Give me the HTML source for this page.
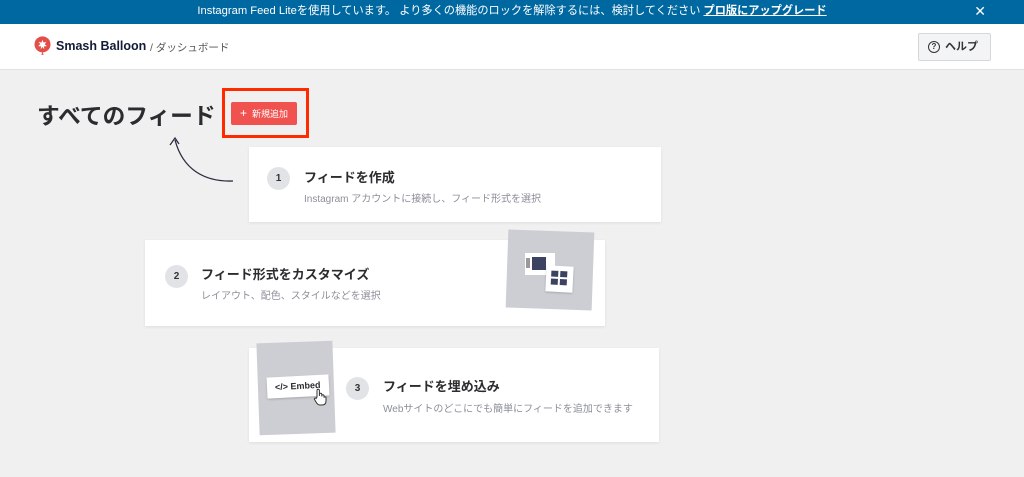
<!DOCTYPE html><html><head><meta charset="utf-8"><style>
*{box-sizing:border-box;margin:0;padding:0}
body{width:1024px;height:477px;overflow:hidden;background:#f0f0f1;font-family:"Liberation Sans","Noto Sans CJK JP",sans-serif;position:relative;color:#141b38}
.top{position:absolute;left:0;top:0;width:1024px;height:24px;background:#0068a0;color:#fff;font-size:11.2px;text-align:center;line-height:22px}
.top b{text-decoration:underline}
.hdr{position:absolute;top:24px;left:0;width:1024px;height:46px;background:#fff;border-bottom:1px solid #e2e2e2}
.card{position:absolute;background:#fff;box-shadow:0 1px 3px rgba(0,0,0,.08)}
.num{position:absolute;width:23px;height:23px;border-radius:50%;background:#e2e3e6;font-size:10px;font-weight:bold;text-align:center;line-height:23px;color:#333}
.t{position:absolute;font-size:13px;font-weight:bold;color:#2c2c30}
.s{position:absolute;font-size:10px;color:#8c8f9a}
</style></head><body>
<div class="top">Instagram Feed Liteを使用しています。 より多くの機能のロックを解除するには、検討してください <b>プロ版にアップグレード</b><span style="position:absolute;right:38px;font-size:14px">✕</span></div>
<div class="hdr">
<svg style="position:absolute;left:34px;top:12px" width="17" height="20" viewBox="0 0 15 18"><circle cx="7.5" cy="7.5" r="7.2" fill="#e34f48"/><path d="M7.5 14l-1 3h2z" fill="#e34f48"/><path d="M7.5 3.5l1 2.5 2.5-.8-1.5 2.2 2 1.7-2.7.2.3 2.6-1.6-2-1.6 2 .3-2.6-2.7-.2 2-1.7-1.5-2.2 2.5.8z" fill="#fff"/></svg>
<div style="position:absolute;left:56px;top:15px;font-size:12.5px;font-weight:bold;color:#141b38">Smash Balloon</div>
<div style="position:absolute;left:150px;top:16px;font-size:10.5px;color:#555">/ ダッシュボード</div>
<div style="position:absolute;left:918px;top:9px;width:73px;height:28px;background:#f3f4f5;border:1px solid #d5d7db;border-radius:2px;font-size:11px;line-height:26px;padding-left:26px;color:#333;font-weight:bold">ヘルプ<span style="position:absolute;left:9px;top:7px;width:12px;height:12px;border:1.3px solid #333;border-radius:50%;font-size:8px;line-height:10px;text-align:center">?</span></div>
</div>
<div style="position:absolute;left:37px;top:98px;font-size:22.7px;font-weight:bold;color:#2c2c30">すべてのフィード</div>
<div style="position:absolute;left:222px;top:88px;width:87px;height:50px;border:3px solid #ff2a00"></div>
<div style="position:absolute;left:231px;top:102px;width:66px;height:23px;background:#f0524f;color:#fff;font-size:9px;line-height:23px;border-radius:2px;padding-left:9px"><span style="font-size:12px;margin-right:5px">+</span>新規追加</div>
<svg style="position:absolute;left:165px;top:130px" width="72" height="56"><path d="M68 51C40 52 18 40 10 10" fill="none" stroke="#2c2c40" stroke-width="1.3"/><path d="M5 15L10 8 14 14" fill="none" stroke="#2c2c40" stroke-width="1.3"/></svg>
<div class="card" style="left:249px;top:147px;width:412px;height:75px"><div class="num" style="left:18px;top:20px">1</div><div class="t" style="left:55px;top:20px">フィードを作成</div><div class="s" style="left:55px;top:43px">Instagram アカウントに接続し、フィード形式を選択</div></div>
<div class="card" style="left:145px;top:240px;width:460px;height:86px"><div class="num" style="left:20px;top:25px">2</div><div class="t" style="left:56px;top:24px">フィード形式をカスタマイズ</div><div class="s" style="left:56px;top:47px">レイアウト、配色、スタイルなどを選択</div></div>
<div style="position:absolute;left:507px;top:231px;width:86px;height:78px;background:#cdced3;transform:rotate(2deg)"></div>
<div style="position:absolute;left:525px;top:253px;width:30px;height:22px;background:#fff"><div style="position:absolute;left:1px;top:5px;width:4px;height:10px;background:#999"></div><div style="position:absolute;left:7px;top:4px;width:14px;height:13px;background:#3c4361"></div></div>
<div style="position:absolute;left:546px;top:266px;width:27px;height:26px;background:#fff;box-shadow:0 1px 2px rgba(0,0,0,.2);transform:rotate(3deg)"><div style="position:absolute;left:5px;top:5px;width:7px;height:6px;background:#3c4361;box-shadow:9px 0 #3c4361,0 8px #3c4361,9px 8px #3c4361"></div></div>
<div class="card" style="left:249px;top:348px;width:410px;height:94px"><div class="num" style="left:97px;top:29px">3</div><div class="t" style="left:134px;top:28px">フィードを埋め込み</div><div class="s" style="left:134px;top:52px">Webサイトのどこにでも簡単にフィードを追加できます</div></div>
<div style="position:absolute;left:258px;top:342px;width:76px;height:92px;background:#cdced3;transform:rotate(-2deg)"></div>
<div style="position:absolute;left:267px;top:376px;width:62px;height:21px;background:#fff;transform:rotate(-3deg);font-size:9px;font-weight:bold;line-height:21px;padding-left:8px;color:#2c2c30;box-shadow:0 1px 2px rgba(0,0,0,.2)">&lt;/&gt; Embed</div>
<svg style="position:absolute;left:313px;top:388px" width="14" height="18" viewBox="0 0 14 18"><path d="M4 9V2.5a1.2 1.2 0 0 1 2.4 0V8V6.5a1.2 1.2 0 0 1 2.4 0V8.5V7.5a1.2 1.2 0 0 1 2.2 0V9.5a1.1 1.1 0 0 1 2 0V13c0 2.5-1.5 4-4 4H7c-1.5 0-2.5-.8-3.3-2L1.5 11.5c-.6-1 .8-2 1.6-1z" fill="#fff" stroke="#333" stroke-width="1"/></svg>
</body></html>
